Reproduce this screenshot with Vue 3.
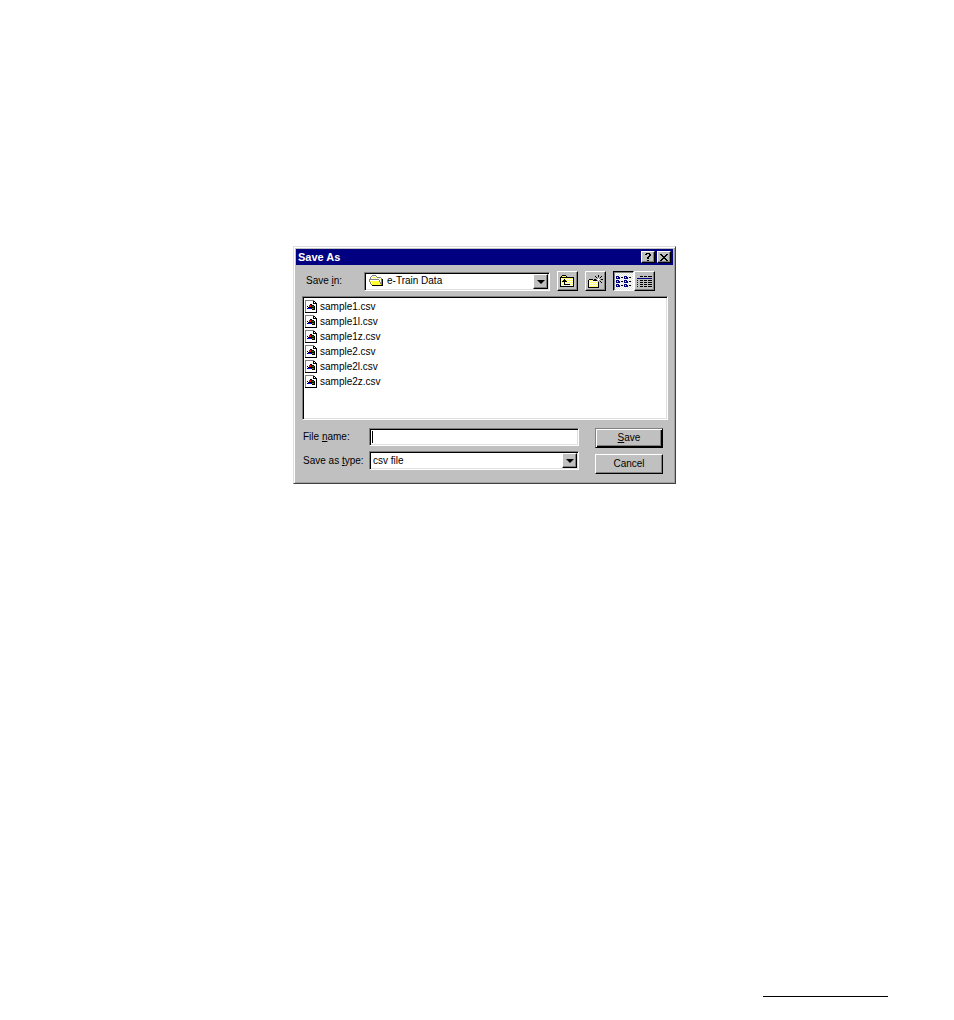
<template>
  <div class="page">
    <form class="dialog" @submit.prevent>
      <header class="title-bar">
        <h1>Save As</h1>
        <button type="button" class="raised caption-btn" aria-label="Help">
          <svg width="10" height="9" viewBox="0 0 10 9" shape-rendering="crispEdges">
            <path d="M3 0h4v1H3zM2 1h2v1H2zM6 1h2v2H6zM5 3h2v1H5zM4 4h2v2H4zM4 7h2v1H4z" />
          </svg>
        </button>
        <button type="button" class="raised caption-btn" aria-label="Close">
          <svg width="10" height="9" viewBox="0 0 10 9" shape-rendering="crispEdges">
            <path d="M1 1h2v1H1zM7 1h2v1H7zM2 2h2v1H2zM6 2h2v1H6zM3 3h4v1H3zM4 4h2v1H4zM3 5h4v1H3zM2 6h2v1H2zM6 6h2v1H6zM1 7h2v1H1zM7 7h2v1H7z" />
          </svg>
        </button>
      </header>

      <div class="content">
        <div class="toolbar">
          <label for="folder">Save <u>i</u>n:</label>
          <div class="combo folder-combo">
            <select id="folder" v-model="folder" class="sunken">
              <option>e-Train Data</option>
            </select>
            <svg class="combo-icon" width="15" height="12" viewBox="0 0 15 12" shape-rendering="crispEdges">
              <defs>
                <pattern id="dither" width="2" height="2" patternUnits="userSpaceOnUse">
                  <rect width="2" height="2" fill="#ffff66" />
                  <rect width="1" height="1" fill="#fff" />
                  <rect x="1" y="1" width="1" height="1" fill="#fff" />
                </pattern>
              </defs>
              <path fill="#808080" d="M3 0h4v1H3zM2 1h1v1H2zM7 1h1v1H7zM8 2h4v1H8zM1 2h1v2H1zM12 3h1v2h-1z" />
              <path fill="url(#dither)" d="M3 1h4v1h1v1h4v2H2V2h1z" />
              <path fill="#808080" d="M0 4h10v1H0zM0 5h1v2H0zM1 7h1v2H1zM2 9h1v1H2zM10 5h1v2h-1zM11 7h1v2h-1zM12 5h1v5h-1z" />
              <path fill="#ffff33" d="M1 5h9v2h1v2h1v1H3V9H2V7H1z" />
              <path fill="#fff" d="M1 5h9v1H1zM2 7h1v1H2zM11 5h1v2h-1z" />
              <path d="M3 10h10v1H3zM13 4h1v7h-1z" />
            </svg>
            <span class="raised arrow" aria-hidden="true"></span>
          </div>
          <button type="button" class="raised tool" aria-label="Up one level">
            <svg width="15" height="13" viewBox="0 0 15 13" shape-rendering="crispEdges">
              <path d="M2 0h4v1H2zM1 1h1v1H1zM6 1h1v1H6zM0 2h14v10H0z" />
              <path fill="url(#dither)" d="M2 1h4v1H2zM1 3h12v8H1z" />
              <path d="M4 4h1v1H4zM3 5h3v1H3zM2 6h5v1H2zM4 7h1v3H4zM5 9h5v1H5z" />
            </svg>
          </button>
          <button type="button" class="raised tool" aria-label="Create new folder">
            <svg width="15" height="13" viewBox="0 0 15 13" shape-rendering="crispEdges">
              <path d="M1 4h4v1H1zM0 5h11v8H0z" />
              <path fill="url(#dither)" d="M1 5h4v1h5v6H1z" />
              <path d="M10 0h1v2h-1zM7 1h1v1H7zM8 2h1v1H8zM13 1h1v1h-1zM12 2h1v1h-1zM13 4h2v1h-2zM6 4h2v1H6zM12 6h1v1h-1zM13 7h1v1h-1zM10 7h1v1h-1z" />
              <path fill="#808080" d="M10 2h1v1h-1zM9 3h1v1H9zM11 3h1v1h-1zM8 4h1v1H8zM12 4h1v1h-1zM9 5h1v1H9zM11 5h1v1h-1zM10 6h1v1h-1z" />
              <path fill="#fff" d="M10 3h1v3h-1zM9 4h3v1H9z" />
            </svg>
          </button>
          <div class="views">
            <button
              v-for="v in views"
              :key="v"
              type="button"
              class="raised tool"
              :class="{ pressed: view === v }"
              :aria-label="v"
              :aria-pressed="view === v"
              @click="view = v"
            >
              <svg v-if="v === 'List'" width="15" height="13" viewBox="0 0 15 13" shape-rendering="crispEdges">
                <path fill="#000080" d="M0 1h3v1H0zM0 2h1v1H0zM2 2h2v1H2zM0 3h4v1H0zM8 1h3v1H8zM8 2h1v1H8zM10 2h2v1h-2zM8 3h4v1H8zM0 5h3v1H0zM0 6h1v1H0zM2 6h2v1H2zM0 7h4v1H0zM8 5h3v1H8zM8 6h1v1H8zM10 6h2v1h-2zM8 7h4v1H8zM0 9h3v1H0zM0 10h1v1H0zM2 10h2v1H2zM0 11h4v1H0zM8 9h3v1H8zM8 10h1v1H8zM10 10h2v1h-2zM8 11h4v1H8z" />
                <path d="M5 2h2v1H5zM13 2h2v1h-2zM5 6h2v1H5zM13 6h2v1h-2zM5 10h2v1H5zM13 10h2v1h-2z" />
              </svg>
              <svg v-else width="15" height="13" viewBox="0 0 15 13" shape-rendering="crispEdges">
                <path fill="#000080" d="M0 3h15v1H0zM0 5h1v1H0zM0 7h1v1H0zM0 9h1v1H0zM0 11h1v1H0z" />
                <path d="M3 1h3v1H3zM7 1h3v1H7zM11 1h4v1h-4zM3 5h3v1H3zM7 5h3v1H7zM11 5h4v1h-4zM3 7h3v1H3zM7 7h3v1H7zM11 7h4v1h-4zM3 9h3v1H3zM7 9h3v1H7zM11 9h4v1h-4zM3 11h3v1H3zM7 11h3v1H7zM11 11h4v1h-4z" />
              </svg>
            </button>
          </div>
        </div>

        <ul class="files sunken">
          <li v-for="file in files" :key="file">
            <svg width="12" height="14" viewBox="0 0 12 14" shape-rendering="crispEdges">
              <path fill="#808080" d="M0 0h9v1H0zM0 1h1v12H0z" />
              <path fill="#fff" d="M1 1h8v3h2v8H1z" />
              <path d="M8 1h1v3H8zM9 1h1v1H9zM10 2h1v1h-1zM9 3h3v1H9zM11 4h1v9h-1zM0 12h12v1H0z" />
              <path d="M5 4h2v1H5zM7 5h2v1H7zM9 6h1v4H9zM2 6h1v1H2zM2 8h1v1H2zM3 7h1v1H3z" />
              <path fill="#ff0000" d="M4 5h2v2H4z" />
              <path fill="#008000" d="M7 6h2v1H7z" />
              <path d="M6 5h1v4H6zM4 7h5v1H4z" />
              <path fill="#0000ff" d="M3 8h3v1H3z" />
              <path fill="#808000" d="M7 8h2v1H7z" />
              <path d="M7 9h2v1H7z" />
            </svg>
            <span>{{ file }}</span>
          </li>
        </ul>

        <div class="footer">
          <div class="fields">
            <label for="file-name">File <u>n</u>ame:</label>
            <div class="name-box">
              <input id="file-name" v-model="fileName" type="text" class="sunken" />
              <span v-if="!fileName" class="caret" aria-hidden="true"></span>
            </div>
            <label for="file-type">Save as <u>t</u>ype:</label>
            <div class="combo">
              <select id="file-type" v-model="fileType" class="sunken">
                <option>csv file</option>
              </select>
              <span class="raised arrow" aria-hidden="true"></span>
            </div>
          </div>
          <div class="actions">
            <button type="submit" class="raised default"><u>S</u>ave</button>
            <button type="button" class="raised">Cancel</button>
          </div>
        </div>
      </div>
    </form>
    <hr class="rule" />
  </div>
</template>

<script setup>
import { ref } from 'vue';

const folder = ref('e-Train Data');
const fileName = ref('');
const fileType = ref('csv file');
const views = ['List', 'Details'];
const view = ref('List');

const files = [
  'sample1.csv',
  'sample1l.csv',
  'sample1z.csv',
  'sample2.csv',
  'sample2l.csv',
  'sample2z.csv',
];
</script>

<style>
body {
  margin: 0;
  background: #fff;
}
</style>

<style scoped>
* {
  box-sizing: border-box;
}

.page {
  display: flex;
  flex-direction: column;
  align-items: center;
  justify-content: space-between;
  min-height: 100vh;
  padding: 246px 0 23px 15px;
  font-family: "Liberation Sans", Arial, sans-serif;
  font-size: 10px;
  line-height: 14px;
  color: #000;
}

button,
input,
select {
  margin: 0;
  font: inherit;
  color: inherit;
  border-radius: 0;
  outline: none;
}

svg {
  display: block;
  flex: none;
}

/* Bevels */
.raised {
  padding: 0;
  background: #c0c0c0;
  border: 1px solid;
  border-color: #fff #000 #000 #fff;
  box-shadow: inset -1px -1px #808080;
}

.sunken {
  background: #fff;
  border: 1px solid;
  border-color: #808080 #fff #fff #808080;
  box-shadow: inset 1px 1px #000, inset -1px -1px #dfdfdf;
}

/* Window */
.dialog {
  width: 100%;
  max-width: 383px;
  padding: 2px;
  background: #c0c0c0;
  border: 1px solid;
  border-color: #dfdfdf #404040 #404040 #dfdfdf;
  box-shadow: inset 1px 1px #fff, inset -1px -1px #a0a0a0;
}

.title-bar {
  display: flex;
  align-items: center;
  height: 16px;
  padding: 0 2px;
  background: #000080;
  color: #fff;
}

.title-bar h1 {
  flex: 1;
  margin: 0;
  font-size: 11px;
  line-height: 16px;
}

.caption-btn {
  display: flex;
  align-items: center;
  justify-content: center;
  width: 14px;
  height: 12px;
  color: #000;
}

.caption-btn + .caption-btn {
  margin-left: 2px;
}

.content {
  padding: 6px 5px 7px 6px;
}

/* Toolbar */
.toolbar {
  display: flex;
  align-items: center;
  padding: 0 13px 0 4px;
}

.toolbar label {
  width: 58px;
}

.tool {
  display: flex;
  align-items: center;
  justify-content: center;
  width: 21px;
  height: 20px;
  margin-left: 7px;
}

.views {
  display: flex;
  margin-left: 7px;
}

.views .tool {
  margin: 0;
}

.tool.pressed {
  background: repeating-conic-gradient(#fff 0 25%, #dfdfdf 0 50%) 0 0 / 2px 2px;
  border-color: #000 #fff #fff #000;
  box-shadow: inset 1px 1px #808080;
}

.combo {
  position: relative;
  flex: 1;
}

.combo select {
  display: block;
  width: 100%;
  height: 19px;
  padding: 0 18px 0 3px;
  appearance: none;
}

.folder-combo select {
  padding-left: 22px;
}

.combo-icon {
  position: absolute;
  top: 3px;
  left: 5px;
  pointer-events: none;
}

.arrow {
  position: absolute;
  top: 2px;
  right: 2px;
  bottom: 2px;
  width: 15px;
  pointer-events: none;
}

.arrow::after {
  content: "";
  display: block;
  width: 0;
  margin: 5px auto 0;
  border: 4px solid transparent;
  border-top-color: #000;
  border-bottom: 0;
}

/* File list */
.files {
  height: 124px;
  margin: 5px 0 8px;
  padding: 2px;
  list-style: none;
}

.files li {
  display: flex;
  align-items: center;
  gap: 3px;
  height: 15px;
}

/* Fields and buttons */
.footer {
  display: flex;
  gap: 16px;
  padding: 0 5px 0 1px;
}

.fields {
  flex: 1;
  display: grid;
  grid-template-columns: 66px 1fr;
  grid-template-rows: 18px 19px;
  row-gap: 5px;
  align-items: center;
}

.name-box {
  position: relative;
}

.name-box input {
  display: block;
  width: 100%;
  height: 18px;
  padding: 0 3px;
}

.caret {
  position: absolute;
  top: 3px;
  left: 3px;
  width: 1px;
  height: 12px;
  background: #000;
}

.actions {
  display: grid;
  gap: 6px;
  width: 68px;
}

.actions button {
  height: 20px;
}

.actions .default {
  border-color: #808080 #000 #000 #808080;
  box-shadow: inset 1px 1px #fff, inset -1px -1px #000, inset -2px -2px #808080;
}

/* Footer rule of the page */
.rule {
  align-self: flex-end;
  width: 125px;
  height: 1px;
  margin: 0 66px 0 0;
  border: 0;
  background: #000;
}
</style>
